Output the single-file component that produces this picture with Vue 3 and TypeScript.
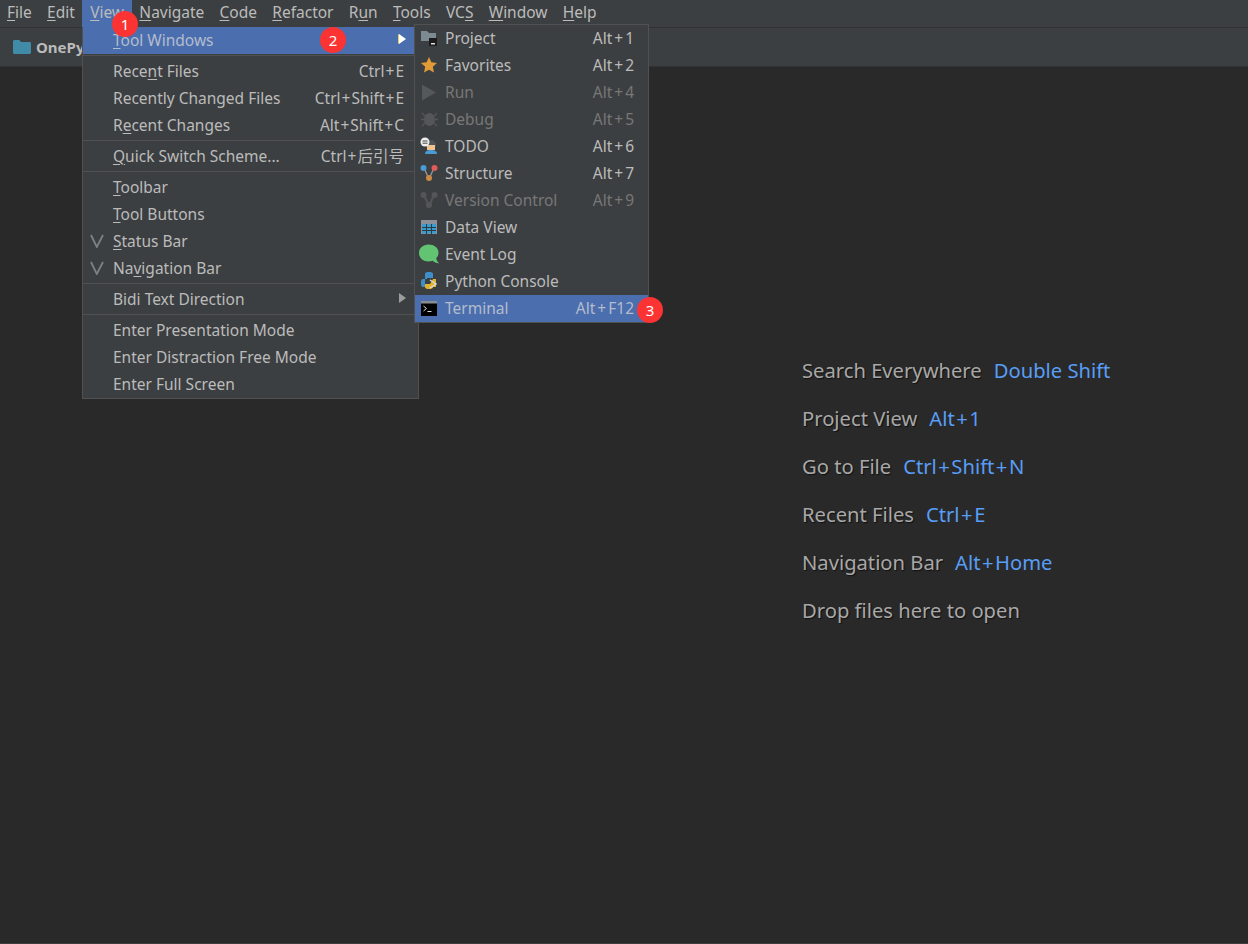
<script setup lang="ts">
interface Row {
  pre?: string
  mn?: string
  post?: string
  key?: string
  checked?: boolean
  sub?: boolean
  active?: boolean
  disabled?: boolean
  icon?: string
  sep?: boolean
}

const topMenu = [
  ['', 'F', 'ile'], ['', 'E', 'dit'], ['', 'V', 'iew'], ['', 'N', 'avigate'], ['', 'C', 'ode'],
  ['', 'R', 'efactor'], ['R', 'u', 'n'], ['', 'T', 'ools'], ['VC', 'S', ''], ['', 'W', 'indow'], ['', 'H', 'elp'],
]

const viewMenu: Row[] = [
  { mn: 'T', post: 'ool Windows', sub: true, active: true },
  { sep: true },
  { pre: 'Rece', mn: 'n', post: 't Files', key: 'Ctrl+E' },
  { pre: 'Recently Changed Files', key: 'Ctrl+Shift+E' },
  { pre: 'R', mn: 'e', post: 'cent Changes', key: 'Alt+Shift+C' },
  { sep: true },
  { mn: 'Q', post: 'uick Switch Scheme...', key: 'Ctrl+后引号' },
  { sep: true },
  { mn: 'T', post: 'oolbar' },
  { mn: 'T', post: 'ool Buttons' },
  { mn: 'S', post: 'tatus Bar', checked: true },
  { pre: 'Na', mn: 'v', post: 'igation Bar', checked: true },
  { sep: true },
  { pre: 'Bidi Text Direction', sub: true },
  { sep: true },
  { pre: 'Enter Presentation Mode' },
  { pre: 'Enter Distraction Free Mode' },
  { pre: 'Enter Full Screen' },
]

const toolMenu: Row[] = [
  { pre: 'Project', key: 'Alt+1', icon: 'project' },
  { pre: 'Favorites', key: 'Alt+2', icon: 'star' },
  { pre: 'Run', key: 'Alt+4', icon: 'run', disabled: true },
  { pre: 'Debug', key: 'Alt+5', icon: 'debug', disabled: true },
  { pre: 'TODO', key: 'Alt+6', icon: 'todo' },
  { pre: 'Structure', key: 'Alt+7', icon: 'structure' },
  { pre: 'Version Control', key: 'Alt+9', icon: 'vcs', disabled: true },
  { pre: 'Data View', icon: 'data' },
  { pre: 'Event Log', icon: 'log' },
  { pre: 'Python Console', icon: 'python' },
  { pre: 'Terminal', key: 'Alt+F12', icon: 'terminal', active: true },
]

const hints = [
  ['Search Everywhere', 'Double Shift'],
  ['Project View', 'Alt+1'],
  ['Go to File', 'Ctrl+Shift+N'],
  ['Recent Files', 'Ctrl+E'],
  ['Navigation Bar', 'Alt+Home'],
  ['Drop files here to open', ''],
]
</script>

<template>
  <div class="ide">
    <header class="menubar">
      <span v-for="(m, i) in topMenu" :key="i" class="top-item" :class="{ open: i === 2 }">{{ m[0] }}<u>{{ m[1] }}</u>{{ m[2] }}</span>
    </header>
    <nav class="navbar">
      <svg class="folder" width="18" height="14" viewBox="0 0 18 14">
        <path d="M0 1.500C0 .7.6 0 1.400 0h5l1.600 2h8.600c.8 0 1.400.6 1.400 1.400v9.200c0 .8-.6 1.400-1.400 1.400H1.400C.6 14 0 13.400 0 12.600z" fill="#3f8ba8" />
      </svg>
      <b class="crumb">OnePython</b>
    </nav>
    <main class="welcome">
      <p v-for="h in hints" :key="h[0]" class="hint">{{ h[0] }}<span v-if="h[1]" class="shortcut"><template v-for="(part, n) in h[1].split('+')" :key="n"><span v-if="n" class="plus">+</span>{{ part }}</template></span></p>
    </main>

    <div class="menu view-menu">
      <template v-for="(r, i) in viewMenu" :key="i">
        <div v-if="r.sep" class="sep"></div>
        <div v-else class="row" :class="{ active: r.active }">
          <svg v-if="r.checked" class="check" width="14" height="14" viewBox="0 0 14 14"><path d="M1 1l5.800 12L13 1" fill="none" stroke="#7b8186" stroke-width="1.800" /></svg>
          <span class="label">{{ r.pre }}<u v-if="r.mn">{{ r.mn }}</u>{{ r.post }}</span>
          <span v-if="r.key" class="key"><template v-for="(part, n) in r.key.split('+')" :key="n"><span v-if="n" class="plus">+</span>{{ part }}</template></span>
          <i v-if="r.sub" class="arrow" :class="{ cursor: r.active }"></i>
        </div>
      </template>
    </div>

    <div class="menu tool-menu">
      <div v-for="r in toolMenu" :key="r.pre" class="row" :class="{ active: r.active, disabled: r.disabled }">
        <svg class="icon" width="20" height="20" viewBox="0 0 20 20">
          <g v-if="r.icon === 'project'">
            <path d="M2 3h6l2 2h7v8H2z" fill="#7d8a92" />
            <rect x="10" y="10" width="8" height="8" fill="#1c1c1c" />
            <rect x="12" y="15" width="4" height="1.500" fill="#ddd" />
          </g>
          <path v-else-if="r.icon === 'star'" d="M10 2l2.400 5.300 5.600.6-4.200 3.900 1.200 5.700L10 14.700l-5 2.800 1.200-5.700L2 7.900l5.600-.6z" fill="#e09b37" />
          <path v-else-if="r.icon === 'run'" d="M3 2.500l14 8-14 8z" fill="#55585a" />
          <g v-else-if="r.icon === 'debug'" fill="#545658">
            <ellipse cx="10.500" cy="10.500" rx="5.500" ry="6.500" />
            <path d="M3 4l3 3M18 4l-3 3M2 10.500h3M19 10.500h-3M3 17l3-3M18 17l-3-3" stroke="#545658" stroke-width="1.300" />
          </g>
          <g v-else-if="r.icon === 'todo'">
            <circle cx="12" cy="9" r="5" fill="#4f5355" />
            <rect x="8" y="9" width="8" height="5" fill="#f1c48f" />
            <path d="M6 18c0-3 2.500-4 6-4s6 1 6 4z" fill="#4a9ad4" />
            <circle cx="6" cy="6" r="4.500" fill="#eee" />
            <path d="M3.500 5h5M3.500 7.200h5" stroke="#444" stroke-width="1" />
          </g>
          <g v-else-if="r.icon === 'structure'">
            <path d="M5 5l5 11 5-11" fill="none" stroke="#9a9a9a" stroke-width="1.300" />
            <circle cx="4.500" cy="5" r="3" fill="#4a9ad4" />
            <circle cx="15.500" cy="5" r="3" fill="#e05a5a" />
            <circle cx="10" cy="15" r="3" fill="#c88a44" />
          </g>
          <g v-else-if="r.icon === 'vcs'" fill="#535557">
            <path d="M5 5l5 11 5-11" fill="none" stroke="#535557" stroke-width="2" />
            <circle cx="4.500" cy="5" r="3" />
            <circle cx="15.500" cy="5" r="3" />
            <circle cx="10" cy="15" r="3" />
          </g>
          <g v-else-if="r.icon === 'data'">
            <rect x="2" y="3" width="16" height="14" fill="#8b9196" />
            <path d="M3 7h14v9.500H3z" fill="#3a9ccc" />
            <path d="M3 10.500h14M3 13.500h14M7.500 7v10M12.500 7v10" stroke="#2b3a42" stroke-width="1" />
          </g>
          <path v-else-if="r.icon === 'log'" d="M9.500 0.500c5.500 0 10 3 10 8 0 2.500-.8 4.300-2.300 5.600.3 1.900 1.200 3.500 2.800 5.400-2.800-.4-4.900-1.300-6.300-2.700-1.300.4-2.700.7-4.200.7C4 17.500 0 13.900 0 9s4-8.500 9.500-8.500z" fill="#62c373" />
          <g v-else-if="r.icon === 'python'">
            <path d="M6 3c0-1.500 1.500-2 4-2s4 .5 4 2v4H8v1h-4c-1.500 0-2 1.500-2 4s.5 4 2 4h2z" fill="#3d8fc9" />
            <path d="M14 8h3v8h-3c0 1.500-1.500 2-4 2s-4-.5-4-2v-3h5z" fill="#e3b32c" />
            <path d="M11 9l6 4-6 4" fill="none" stroke="#d8d8d8" stroke-width="1.500" />
          </g>
          <g v-else-if="r.icon === 'terminal'">
            <rect x="2" y="3" width="16" height="15" fill="#000" />
            <rect x="2" y="3" width="16" height="2.500" fill="#8a8d90" />
            <path d="M4.500 8l3 2.500-3 2.500" fill="none" stroke="#ddd" stroke-width="1" />
            <path d="M8.500 13.500h4" stroke="#ddd" stroke-width="1" />
          </g>
        </svg>
        <span class="label">{{ r.pre }}</span>
        <span v-if="r.key" class="key"><template v-for="(part, n) in r.key.split('+')" :key="n"><span v-if="n" class="plus">+</span>{{ part }}</template></span>
      </div>
    </div>

    <span class="badge b1">1</span>
    <span class="badge b2">2</span>
    <span class="badge b3">3</span>
  </div>
</template>

<style scoped>
.ide {
  position: relative;
  box-sizing: border-box;
  width: 1248px;
  height: 944px;
  overflow: hidden;
  display: flex;
  flex-direction: column;
  background: #292929;
  border-bottom: 1px solid #3c3f41;
  color: #bbbbbb;
  font-family: "Noto Sans", "Noto Sans CJK SC", sans-serif;
  font-size: 15.5px;
}
u { text-underline-offset: 2px; text-decoration-thickness: 1px; }
.menubar {
  height: 27px;
  flex: none;
  display: flex;
  background: #3c3f41;
  border-bottom: 1px solid #323232;
}
.top-item {
  padding: 0 7.650px;
  line-height: 25px;
}
.top-item:first-child { padding-left: 7px; }
.top-item.open { background: #4b6eaf; }
.navbar {
  height: 38px;
  flex: none;
  display: flex;
  align-items: center;
  padding-left: 13px;
  gap: 5px;
  background: #3c3f41;
  border-bottom: 1px solid #323232;
  font-size: 15px;
}
.crumb { font-weight: 700; }
.welcome {
  flex: 1;
  padding: 288px 0 0 802px;
  font-size: 20.2px;
}
.hint {
  margin: 0 0 18px;
  height: 30px;
  line-height: 30px;
  color: #a8a8a8;
  text-shadow: 1px 1px 1px #111;
  white-space: nowrap;
}
.shortcut { margin-left: 12px; color: #589df6; text-shadow: none; }
.shortcut .plus { margin: 0 1.500px; }
.menu {
  position: absolute;
  box-sizing: border-box;
  background: #3c3f41;
  border: 1px solid #515151;
}
.view-menu { left: 82px; top: 27px; width: 337px; height: 372px; border-top: none; }
.tool-menu { left: 414px; top: 24px; width: 235px; height: 299px; }
.row {
  position: relative;
  box-sizing: border-box;
  height: 27px;
  padding-bottom: 2px;
  display: flex;
  align-items: center;
  white-space: nowrap;
}
.row.active { background: #4b6eaf; color: #b3bccc; }
.row.disabled { color: #777777; }
.label { margin-left: 30px; }
.key { margin-left: auto; padding-right: 14px; }
.key .plus { margin: 0 1px; }
.tool-menu .key .plus { margin: 0 2px; }
.sep { height: 1px; margin: 1px 0 2px; background: #515151; }
.check { position: absolute; left: 7px; top: 6px; }
.icon { position: absolute; left: 4px; top: 3px; }
.arrow {
  position: absolute;
  left: 316px;
  top: 7px;
  border-left: 7px solid #9a9da0;
  border-top: 5px solid transparent;
  border-bottom: 5px solid transparent;
}
.arrow.cursor { border-left-color: #fff; filter: drop-shadow(-1px 0 0 #e0d060); }
.badge {
  position: absolute;
  width: 26px;
  height: 26px;
  border-radius: 50%;
  background: #fb3333;
  color: #fff;
  font-size: 15px;
  line-height: 26px;
  text-align: center;
}
.b1 { left: 112px; top: 11px; }
.b2 { left: 320px; top: 27px; }
.b3 { left: 637px; top: 297px; }
</style>
